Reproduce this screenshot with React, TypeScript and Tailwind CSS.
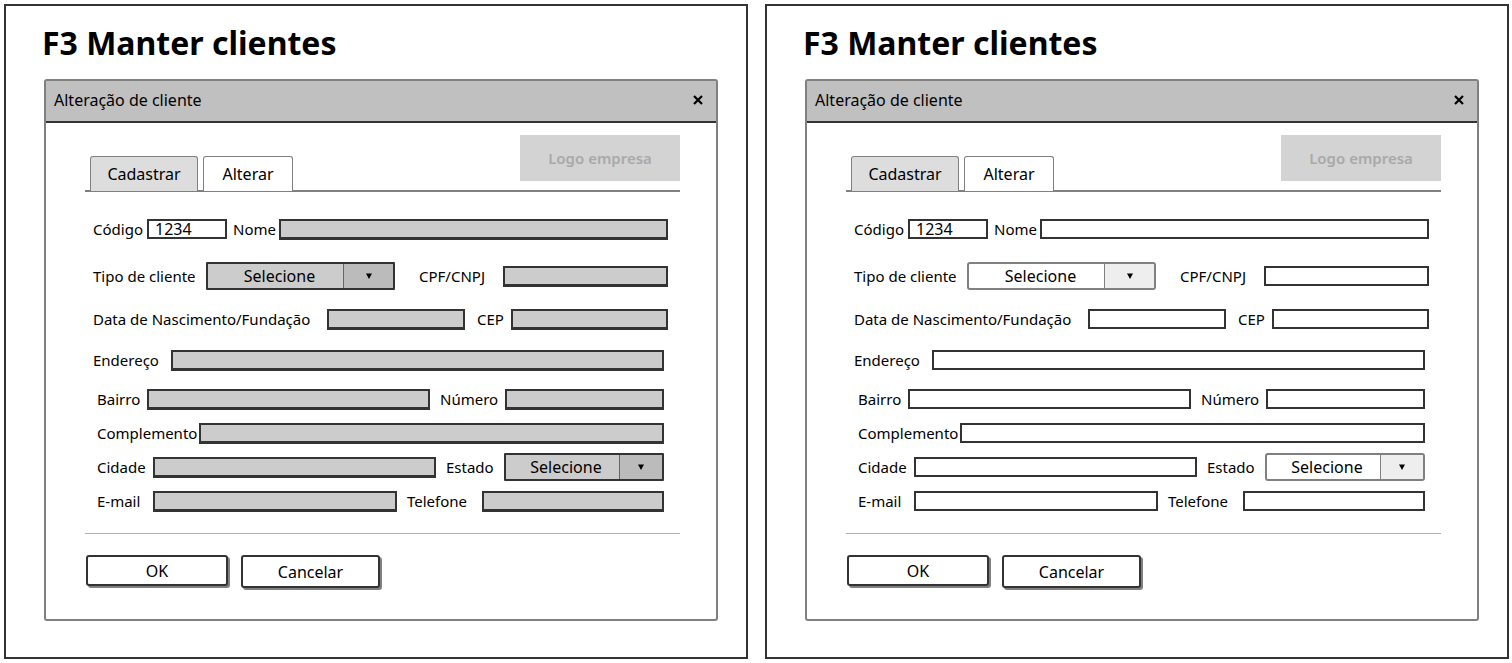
import { useId } from "react";
import type { ReactNode } from "react";

type FieldProps = {
  label: string;
  labelClass: string;
  fieldClass: string;
  locked: boolean;
};

function Label({ id, className, children }: { id: string; className: string; children: ReactNode }) {
  return (
    <label htmlFor={id} className={`shrink-0 text-[15px] whitespace-nowrap ${className}`}>
      {children}
    </label>
  );
}

function TextField({ label, labelClass, fieldClass, locked, value }: FieldProps & { value?: string }) {
  const id = useId();
  return (
    <>
      <Label id={id} className={labelClass}>
        {label}
      </Label>
      <input
        id={id}
        type="text"
        defaultValue={value}
        disabled={locked}
        className={`min-w-0 rounded-none border-2 border-[#333] px-1.5 leading-4 text-black outline-none ${
          locked ? "h-[21px] border-b-[3px] bg-[#ccc]" : "h-5 bg-white"
        } ${fieldClass}`}
      />
    </>
  );
}

function SelectField({ label, labelClass, fieldClass, locked, arrowClass, padClass }: FieldProps & { arrowClass: string; padClass: string }) {
  const id = useId();
  return (
    <>
      <Label id={id} className={labelClass}>
        {label}
      </Label>
      <div
        className={`relative h-7 min-w-0 overflow-hidden border-2 ${
          locked ? "rounded-[1px] border-[#333] bg-[#ccc]" : "rounded-[3px] border-[#808080] bg-white"
        } ${fieldClass}`}
      >
        <select
          id={id}
          disabled={locked}
          className={`h-full w-full appearance-none bg-transparent text-center text-black opacity-100 outline-none ${padClass}`}
        >
          <option>Selecione</option>
        </select>
        <span
          aria-hidden="true"
          className={`pointer-events-none absolute inset-y-0 right-0 flex items-center justify-center border-l ${
            locked ? "border-[#666] bg-[#bbb]" : "border-[#808080] bg-[#eee]"
          } ${arrowClass}`}
        >
          <svg viewBox="0 0 6 6" className="size-1.5 fill-black">
            <path d="M0 0.5h6L3 6z" />
          </svg>
        </span>
      </div>
    </>
  );
}

function Row({ className, children }: { className: string; children: ReactNode }) {
  return <div className={`flex h-7 items-center ${className}`}>{children}</div>;
}

function ClientScreen({ locked }: { locked: boolean }) {
  return (
    <section className="min-w-0 flex-1 border-2 border-[#333] bg-white pr-7 pb-9 pl-9">
      <h1 className="flex h-[73px] items-center text-[32px] font-bold whitespace-nowrap">F3 Manter clientes</h1>
      <div className="ml-0.5 rounded-[3px] border-2 border-[#808080]">
        <header className="flex h-[42px] items-center justify-between border-b-2 border-[#333] bg-[#c0c0c0] pr-3 pb-0.5 pl-2">
          <h2>Alteração de cliente</h2>
          <button type="button" aria-label="Fechar" className="flex size-3 items-center justify-center">
            <svg viewBox="0 0 10 10" className="size-2.5 fill-none stroke-black" strokeWidth="2.2">
              <path d="M1 1l8 8M9 1l-8 8" />
            </svg>
          </button>
        </header>

        <form className="pt-3 pr-9 pb-[31px] pl-[39px]" onSubmit={(e) => e.preventDefault()}>
          <div className="flex h-[57px] items-start justify-between border-b-2 border-[#808080] pl-[5px]">
            <div role="tablist" className="flex gap-[5px] self-end">
              <button
                type="button"
                role="tab"
                aria-selected="false"
                className="-mb-px h-[35px] w-[108px] rounded-t-[3px] border border-b-0 border-[#808080] bg-[#ddd]"
              >
                Cadastrar
              </button>
              <button
                type="button"
                role="tab"
                aria-selected="true"
                className="-mb-px h-[35px] w-[90px] rounded-t-[3px] border border-b-0 border-[#808080] bg-white"
              >
                Alterar
              </button>
            </div>
            <div className="flex h-[46px] w-40 items-center justify-center bg-[#d3d3d3] text-[15px] font-semibold text-[#a9a9a9]">
              Logo empresa
            </div>
          </div>

          <Row className="mt-[23px] pr-3 pl-2">
            <TextField label="Código" labelClass="w-[54px]" fieldClass="w-20" locked={false} value="1234" />
            <TextField label="Nome" labelClass="ml-1.5 w-[46px]" fieldClass="flex-1" locked={locked} />
          </Row>
          <Row className="mt-[19px] pr-3 pl-2">
            <SelectField
              label="Tipo de cliente"
              labelClass="w-[113px]"
              fieldClass="w-[189px]"
              arrowClass="w-[50px]"
              padClass="pr-[42px]"
              locked={locked}
            />
            <TextField label="CPF/CNPJ" labelClass="ml-6 w-[84px]" fieldClass="flex-1" locked={locked} />
          </Row>
          <Row className="mt-[15px] pr-3 pl-2">
            <TextField label="Data de Nascimento/Fundação" labelClass="w-[234px]" fieldClass="w-[138px]" locked={locked} />
            <TextField label="CEP" labelClass="ml-3 w-[34px]" fieldClass="flex-1" locked={locked} />
          </Row>
          <Row className="mt-[13px] pr-4 pl-2">
            <TextField label="Endereço" labelClass="w-[78px]" fieldClass="flex-1" locked={locked} />
          </Row>
          <Row className="mt-[11px] pr-4 pl-3">
            <TextField label="Bairro" labelClass="w-[50px]" fieldClass="w-[283px]" locked={locked} />
            <TextField label="Número" labelClass="ml-2.5 w-[65px]" fieldClass="flex-1" locked={locked} />
          </Row>
          <Row className="mt-1.5 pr-4 pl-3">
            <TextField label="Complemento" labelClass="w-[102px]" fieldClass="flex-1" locked={locked} />
          </Row>
          <Row className="mt-1.5 pr-4 pl-3">
            <TextField label="Cidade" labelClass="w-[56px]" fieldClass="w-[283px]" locked={locked} />
            <SelectField
              label="Estado"
              labelClass="ml-2.5 w-[58px]"
              fieldClass="flex-1"
              arrowClass="w-[43px]"
              padClass="pr-[36px]"
              locked={locked}
            />
          </Row>
          <Row className="mt-1.5 pr-4 pl-3">
            <TextField label="E-mail" labelClass="w-[56px]" fieldClass="w-[244px]" locked={locked} />
            <TextField label="Telefone" labelClass="ml-2.5 w-[75px]" fieldClass="flex-1" locked={locked} />
          </Row>

          <hr className="mt-[18px] border-[#b0b0b0]" />
          <div className="mt-[21px] flex items-start gap-[13px] pl-px">
            <button
              type="submit"
              className="h-[31px] w-[142px] rounded-[3px] border-2 border-[#333] bg-white shadow-[2px_2px_0_#808080]"
            >
              OK
            </button>
            <button
              type="button"
              className="h-[33px] w-[139px] rounded-[3px] border-2 border-[#333] bg-white shadow-[2px_2px_0_#808080]"
            >
              Cancelar
            </button>
          </div>
        </form>
      </div>
    </section>
  );
}

export default function App() {
  return (
    <main className="flex items-start gap-[17px] bg-white pt-1 pr-[3px] pl-1 font-['Comic_Sans_MS','Noto_Sans',sans-serif] text-[16px] leading-5 text-black">
      <ClientScreen locked />
      <ClientScreen locked={false} />
    </main>
  );
}
